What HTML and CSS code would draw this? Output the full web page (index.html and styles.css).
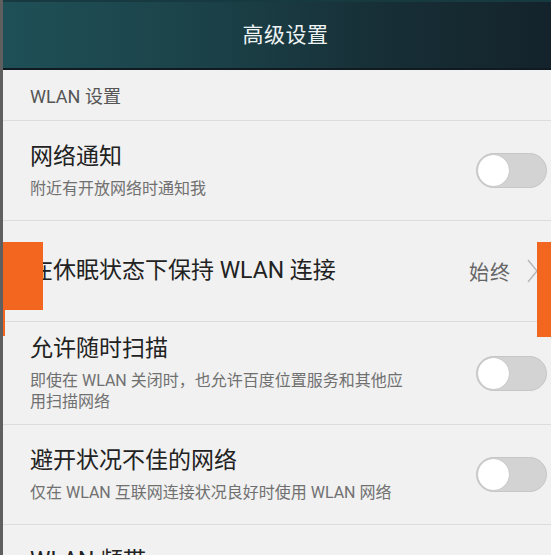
FILE: index.html
```html
<!DOCTYPE html>
<html lang="zh-CN">
<head>
<meta charset="utf-8">
<title>高级设置</title>
<link rel="stylesheet" href="styles.css">
</head>
<body>
<div class="screen">
  <header class="topbar"><h1 class="topbar-title">高级设置</h1></header>
  <div class="section-head">WLAN 设置</div>
  <div class="row">
    <div class="row-text">
      <div class="row-title">网络通知</div>
      <div class="row-sub">附近有开放网络时通知我</div>
    </div>
    <div class="toggle"><span class="knob"></span></div>
  </div>
  <div class="row row-single">
    <div class="row-text">
      <div class="row-title">在休眠状态下保持 WLAN 连接</div>
    </div>
    <div class="row-value">始终</div>
    <svg class="chevron" width="12" height="24" viewBox="0 0 12 24"><path d="M1 1 L10 12 L1 23" fill="none" stroke="#b5b5b5" stroke-width="1.4"/></svg>
  </div>
  <div class="row row-tall">
    <div class="row-text">
      <div class="row-title">允许随时扫描</div>
      <div class="row-sub">即使在 WLAN 关闭时，也允许百度位置服务和其他应用扫描网络</div>
    </div>
    <div class="toggle"><span class="knob"></span></div>
  </div>
  <div class="row">
    <div class="row-text">
      <div class="row-title">避开状况不佳的网络</div>
      <div class="row-sub">仅在 WLAN 互联网连接状况良好时使用 WLAN 网络</div>
    </div>
    <div class="toggle"><span class="knob"></span></div>
  </div>
  <div class="row">
    <div class="row-text">
      <div class="row-title">WLAN 频带</div>
      <div class="row-sub">指定操作的频率范围</div>
    </div>
  </div>
  <div class="mark mark-left"></div>
  <div class="mark mark-left-strip"></div>
  <div class="mark mark-right"></div>
</div>
</body>
</html>
```
FILE: styles.css
```css
* { box-sizing: border-box; }
html, body { margin: 0; padding: 0; }
body {
  background: #f1f1f1;
  font-family: Roboto, "Noto Sans CJK SC", sans-serif;
  overflow: hidden;
}
.screen {
  position: relative;
  width: 551px;
  height: 555px;
  overflow: hidden;
  border-left: 3px solid #5f5f5f;
  background: #f1f1f1;
}
.topbar {
  height: 70px;
  background: linear-gradient(90deg, #1f5057 0%, #1b4047 40%, #172e36 70%, #14232b 100%);
  border-top: 2px solid #163a40;
  border-bottom: 2px solid #0f1b21;
  display: flex;
  align-items: center;
  justify-content: center;
  padding-left: 17px;
  padding-bottom: 4px;
}
.topbar-title {
  margin: 0;
  font-size: 21px;
  font-weight: 400;
  color: #eef3f3;
  letter-spacing: 0.5px;
}
.section-head {
  height: 51px;
  padding: 15px 0 0 27px;
  line-height: 24px;
  font-size: 18px;
  color: #555;
  border-bottom: 1px solid #dcdcdc;
}
.row {
  display: flex;
  align-items: center;
  min-height: 100px;
  padding: 12px 4px 12px 27px;
  border-bottom: 1px solid #dcdcdc;
}
.row-single { min-height: 101px; }
.row-tall { min-height: 103px; }
.row-text { flex: 1; min-width: 0; }
.row-title {
  font-size: 23px;
  line-height: 30px;
  color: #222;
}
.row-sub {
  margin-top: 6px;
  font-size: 16px;
  line-height: 21px;
  color: #707070;
  max-width: 385px;
}
.row-value {
  font-size: 20px;
  letter-spacing: 1px;
  color: #666;
  margin-right: 16px;
}
.chevron { margin-right: 8px; }
.toggle {
  position: relative;
  width: 71px;
  height: 35px;
  border-radius: 18px;
  background: #d3d3d3;
  border: 1px solid #c6c6c6;
  flex-shrink: 0;
}
.knob {
  position: absolute;
  left: 1px;
  top: 1px;
  width: 31px;
  height: 31px;
  border-radius: 50%;
  background: #fff;
  box-shadow: 0 0 1px rgba(0,0,0,0.25);
}
.mark { position: absolute; background: #f2661f; }
.mark-left { left: -3px; top: 242px; width: 43px; height: 68px; }
.mark-left-strip { left: -3px; top: 310px; width: 5px; height: 26px; }
.mark-right { left: 534px; top: 242px; width: 20px; height: 95px; }
```
